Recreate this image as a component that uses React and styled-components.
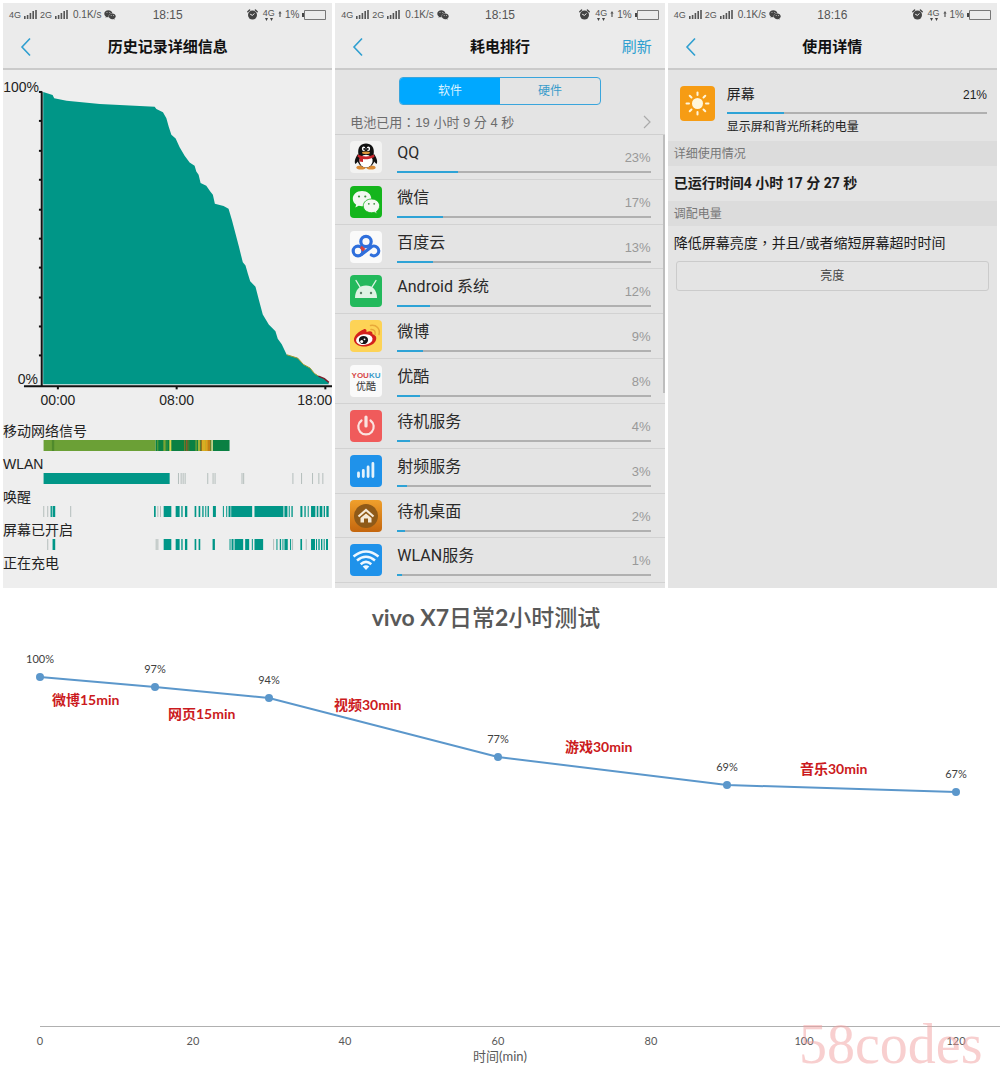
import { useState } from 'react';
import styled, { createGlobalStyle } from 'styled-components';
import { FaWeixin } from 'react-icons/fa';

const GlobalStyle = createGlobalStyle`
  * {
    margin: 0;
    padding: 0;
    box-sizing: border-box;
  }
  body {
    background: #fff;
    font-family: "Liberation Sans", "Noto Sans CJK SC", sans-serif;
  }
  button {
    font-family: inherit;
    border: none;
    background: none;
    cursor: pointer;
  }
  svg {
    display: block;
  }
`;

const Panels = styled.main`
  display: grid;
  grid-template-columns: repeat(3, 1fr);
  gap: 3px;
  padding: 3px 3px 0;
`;

const Panel = styled.section`
  display: flex;
  flex-direction: column;
  min-width: 0;
  background: ${(props) => props.$bg || '#e4e4e4'};
`;

const Header = styled.header`
  background: #ebebeb;
  border-bottom: 2px solid #cacaca;
`;

const Status = styled.div`
  display: grid;
  grid-template-columns: 1fr auto 1fr;
  align-items: center;
  height: 23px;
  padding: 0 6px;
  color: #555;
  font-size: 9px;
`;

const StatusSide = styled.div`
  display: flex;
  align-items: center;
  gap: 3px;
  justify-content: ${(props) => (props.$end ? 'flex-end' : 'flex-start')};
`;

const Speed = styled.span`
  font-size: 10px;
  margin-left: 2px;
`;

const Level = styled.span`
  font-size: 10px;
`;

const NetType = styled.span`
  display: flex;
  flex-direction: column;
  align-items: center;
  line-height: 9px;
  margin-left: 2px;
`;

const Time = styled.span`
  font-size: 12px;
`;

const NavBar = styled.div`
  display: grid;
  grid-template-columns: 1fr auto 1fr;
  align-items: center;
  height: 42px;
  padding: 0 13px 1px;
`;

const BackButton = styled.button`
  justify-self: start;
  width: 20px;
  height: 24px;
`;

const Title = styled.h1`
  font-size: 15px;
  line-height: 20px;
  font-weight: bold;
  color: #111;
`;

const Refresh = styled.button`
  justify-self: end;
  font-size: 15px;
  line-height: 20px;
  color: #2f9fd0;
`;

/* history panel */
const ActivityList = styled.ul`
  list-style: none;
  padding-bottom: 16px;
`;

const ActivityItem = styled.li`
  padding-bottom: ${(props) => (props.$last ? '0' : '4px')};
`;

const ActivityName = styled.p`
  font-size: 14px;
  line-height: 18px;
  color: #222;
`;

/* ranking panel */
const Segment = styled.div`
  display: flex;
  width: 202px;
  height: 28px;
  margin: 7px auto 0;
  border: 1px solid #3aa5dc;
  border-radius: 4px;
  overflow: hidden;
`;

const SegmentButton = styled.button`
  flex: 1;
  font-size: 12px;
  line-height: 20px;
  color: ${(props) => (props.$active ? '#d9f2ff' : '#3a9ccb')};
  background: ${(props) => (props.$active ? '#00a8ff' : 'transparent')};
`;

const UsedRow = styled.button`
  display: flex;
  align-items: center;
  justify-content: space-between;
  height: 30px;
  padding: 4px 14px 0 15px;
  font-family: "Liberation Sans", "Noto Sans CJK TC", sans-serif;
  font-size: 13px;
  color: #6c6c6c;
  border-bottom: 1px solid #cfcfcf;
`;

const AppList = styled.ul`
  flex: 1;
  display: grid;
  grid-auto-rows: 1fr;
  list-style: none;
  padding-bottom: 5px;
  position: relative;
  &::after {
    content: "";
    position: absolute;
    right: 0;
    top: 0;
    width: 2px;
    height: 57%;
    background: #bdbdbd;
  }
`;

const AppRow = styled.li`
  display: grid;
  grid-template-columns: 32px 1fr;
  gap: 15px;
  padding: 6px 14px 0 15px;
  border-bottom: 1px solid #d2d2d2;
`;

const AppHead = styled.div`
  display: flex;
  justify-content: space-between;
  height: 30px;
`;

const AppName = styled.span`
  font-family: Roboto, "Noto Sans CJK SC", sans-serif;
  font-size: 16px;
  line-height: 24px;
  color: #2a2a2a;
`;

const AppPercent = styled.span`
  font-size: 13px;
  line-height: 34px;
  color: #999;
`;

const Track = styled.div`
  height: 2px;
  background: #b0b0b0;
`;

const Fill = styled.div`
  height: 100%;
  background: #2ea3d6;
`;

/* usage panel */
const UsageTop = styled.div`
  display: grid;
  grid-template-columns: 35px 1fr;
  gap: 12px;
  padding: 16px 10px 0 12px;
  height: 71px;
`;

const UsageHead = styled.div`
  display: flex;
  justify-content: space-between;
  height: 26px;
  line-height: 16px;
  font-size: 14px;
  color: #222;
`;

const UsagePercent = styled.span`
  font-size: 12px;
  line-height: 18px;
`;

const UsageNote = styled.p`
  margin-top: 4px;
  font-size: 12px;
  line-height: 18px;
  color: #222;
`;

const SectionTitle = styled.h2`
  padding: 1px 0 0 6px;
  font-size: 12px;
  line-height: 24px;
  font-weight: normal;
  color: #777;
  background: #dcdcdc;
`;

const SectionText = styled.p`
  padding-left: 6px;
  font-family: Roboto, "Noto Sans CJK TC", sans-serif;
  font-size: 14px;
  line-height: 35px;
  white-space: nowrap;
  color: #1c1c1c;
`;

const ValueText = styled(SectionText)`
  font-family: Roboto, "Noto Sans CJK SC", sans-serif;
  font-weight: bold;
`;

const BrightButton = styled.button`
  height: 30px;
  margin: 0 8px;
  border: 1px solid #cbcbcb;
  border-radius: 3px;
  font-size: 12px;
  line-height: 20px;
  color: #444;
`;

/* test chart */
const Report = styled.section`
  font-family: Lato, "Noto Sans CJK SC", sans-serif;
`;

const ReportTitle = styled.h2`
  padding: 14px 28px 0 0;
  text-align: center;
  font-size: 23px;
  line-height: 30px;
  color: #595959;
  span {
    font-weight: 500;
  }
`;

const ChartSvg = styled.svg`
  width: 100%;
  height: auto;
`;

const StripSvg = styled.svg`
  width: 100%;
  height: 11px;
`;

const Signal = () => (
  <svg width="13" height="9" viewBox="0 0 13 9" fill="#555">
    <rect x="0" y="6" width="1.6" height="3" />
    <rect x="2.8" y="5" width="1.6" height="4" />
    <rect x="5.6" y="3" width="1.6" height="6" />
    <rect x="8.4" y="1" width="1.6" height="8" />
    <rect x="11.2" y="0" width="1.6" height="9" />
  </svg>
);

const AlarmIcon = () => (
  <svg width="11" height="11" viewBox="0 0 11 11">
    <circle cx="5.5" cy="6" r="4.5" fill="#444" />
    <path d="M.8 2.8 2.6 1M10.2 2.8 8.4 1" stroke="#444" strokeWidth="1.4" strokeLinecap="round" />
    <path d="M3.2 5.2 5.5 6.4 7.4 4.4" stroke="#eee" strokeWidth="1" fill="none" />
  </svg>
);

const NetIcon = () => (
  <svg width="4" height="8" viewBox="0 0 4 8" fill="#555">
    <path d="M2 0 3.6 2.5H2.6V6H1.4V2.5H.4Z" />
  </svg>
);

const Dots = () => (
  <svg width="8" height="3" viewBox="0 0 8 3" fill="#444">
    <path d="M0 0H3L1.5 3ZM5 0H8L6.5 3Z" />
  </svg>
);

const Battery = () => (
  <svg width="24" height="10" viewBox="0 0 24 10" fill="none" stroke="#777">
    <path d="M2.5.5h21v9h-21z" />
    <path d="M1 3v4" stroke="#444" strokeWidth="2" />
  </svg>
);

const PhoneHeader = ({ time, title, action }) => (
  <Header>
    <Status>
      <StatusSide>
        <span>4G</span>
        <Signal />
        <span>2G</span>
        <Signal />
        <Speed>0.1K/s</Speed>
        <FaWeixin size={12} color="#444" />
      </StatusSide>
      <Time>{time}</Time>
      <StatusSide $end>
        <AlarmIcon />
        <NetType>
          4G
          <Dots />
        </NetType>
        <NetIcon />
        <Level>1%</Level>
        <Battery />
      </StatusSide>
    </Status>
    <NavBar>
      <BackButton aria-label="返回">
        <svg width="20" height="24" viewBox="0 0 20 24">
          <path d="M14 3.5 6 12 14 20.5" fill="none" stroke="#2f9fd0" strokeWidth="1.6" />
        </svg>
      </BackButton>
      <Title>{title}</Title>
      {action && <Refresh>{action}</Refresh>}
    </NavBar>
  </Header>
);

const LEVELS =
  '40.3,22 49.7,25 51.3,28.3 63.7,30.7 97,34 152,36.7 153.7,39 160.3,42.3 163.7,48.3 166,56.7 168.7,65 173,68.7 177,77.3 182,86 187,92.7 192,96 193.7,101.7 196,105 198,113.3 203.7,116 207.7,121.7 210.3,125 212.3,134 221,136.3 226,139 229.3,150 233,164 236.3,176.7 240.3,192.7 243,196 245.3,204 247.7,211.7 253,217.3 256.3,230 260.3,245 266.3,255 273,261.7 275.3,269.3 279.3,274.7 284.3,285.3 295.3,288.7 301,295 307.7,298.7 312,304 316.3,306.7 322,309.3 326.3,312.7 326.3,315 40.3,315';

const BatteryChart = () => (
  <ChartSvg viewBox="0 0 330 353" fontSize="14" fill="#222">
    <polygon points={LEVELS} fill="#009687" stroke="none" />
    <path d="M284.3 285.3 295.3 288.7 301 295 307.7 298.7 312 304 316 306.7" fill="none" stroke="#a39a2c" />
    <path d="M316 306.7 322 309.3 326.5 313" fill="none" stroke="#7a1f2c" strokeWidth="1.4" />
    <path d="M38.8 21.5V317M21 317H330" stroke="#111" strokeWidth="2" fill="none" />
    {[22, 51, 81, 110, 140, 169, 198, 228, 257, 286].map((y) => (
      <path key={y} d={`M36 ${y}h3`} stroke="#111" strokeWidth="2" />
    ))}
    {[55, 174, 323].map((x) => (
      <path key={x} d={`M${x} 317v3`} stroke="#111" strokeWidth="2" />
    ))}
    <text x="36" y="22" textAnchor="end">100%</text>
    <text x="35" y="315" textAnchor="end">0%</text>
    <text x="55" y="336" textAnchor="middle">00:00</text>
    <text x="174" y="336" textAnchor="middle">08:00</text>
    <text x="330" y="336" textAnchor="end">18:00</text>
  </ChartSvg>
);

const TEAL = '#009687';
const PALE = '#b4bebc';
const teal = (list) => list.map(([x, w]) => [x, w, TEAL]);
const pale = (list) => list.map((x) => [x, 3, PALE]);

// every mark is [start, width, colour] on a 990 unit time line
const ACTIVITY = [
  {
    name: '移动网络信号',
    marks: [
      [122, 337, '#6ba036'], [147, 7, '#4f8a2c'], [459, 222, '#0a8043'], [463, 4, '#4f9a38'],
      [482, 7, '#7ba435'], [491, 4, '#2f8f3d'], [500, 6, '#d8d34a'], [544, 4, '#6b7a2c'],
      [550, 5, '#8a5a28'], [557, 3, '#4f7a2c'], [578, 5, '#5b9a38'], [586, 7, '#a0b43a'],
      [594, 4, '#a06c1c'], [598, 12, '#d9ae22'], [610, 6, '#e0a01c'], [616, 8, '#c47f14'],
      [626, 5, '#d8d890'],
    ],
  },
  {
    name: 'WLAN',
    marks: [
      [122, 379, TEAL],
      ...pale([526, 534, 540, 546, 614, 630, 636, 717, 722, 870, 896, 929, 948, 960]),
    ],
  },
  {
    name: '唤醒',
    marks: [
      ...pale([121, 133, 202, 464, 472]),
      ...teal([
        [143, 4], [149, 8], [454, 5], [483, 23], [519, 12], [536, 4], [547, 7], [576, 5],
        [588, 5], [599, 4], [608, 3], [615, 4], [631, 9], [661, 3], [671, 3], [678, 6],
        [686, 63], [756, 87], [846, 9], [859, 3], [867, 4], [894, 6], [906, 4], [916, 3],
        [926, 13], [943, 5], [952, 8], [964, 4], [972, 7],
      ]),
    ],
  },
  {
    name: '屏幕已开启',
    marks: [
      ...pale([133, 459, 464, 812, 869, 910]),
      ...teal([
        [149, 8], [483, 23], [519, 12], [536, 4], [547, 7], [576, 5], [588, 5], [630, 7],
        [681, 3], [687, 6], [696, 26], [728, 12], [748, 3], [756, 26], [822, 3], [832, 4],
        [840, 3], [846, 10], [863, 3], [894, 5], [926, 12], [941, 3], [948, 4], [956, 4],
        [964, 3], [971, 6],
      ]),
    ],
  },
  { name: '正在充电' },
];

const iconArt = {
  qq: (
    <>
      <rect width="32" height="32" rx="4" fill="#f3f3f2" />
      <ellipse cx="11" cy="26.5" rx="4.6" ry="2" fill="#d98a35" />
      <ellipse cx="21" cy="26.5" rx="4.6" ry="2" fill="#d98a35" />
      <path d="M8 13C5 17 4 21 5.5 23 7 22 8 20 9 19ZM24 13C27 17 28 21 26.5 23 25 22 24 20 23 19Z" fill="#111" />
      <ellipse cx="16" cy="18" rx="8.8" ry="8.5" fill="#111" />
      <path d="M8.5 14C7 6 11 2.5 16 2.5S25 6 23.5 14Z" fill="#111" />
      <ellipse cx="16" cy="20" rx="6.6" ry="6.3" fill="#fff" />
      <ellipse cx="13.6" cy="7.8" rx="1.7" ry="2.3" fill="#fff" />
      <ellipse cx="18.4" cy="7.8" rx="1.7" ry="2.3" fill="#fff" />
      <circle cx="14.2" cy="8" r=".9" />
      <circle cx="17.8" cy="8" r=".9" />
      <ellipse cx="16" cy="11.8" rx="4" ry="1.2" fill="#e0963a" />
      <path d="M8 13.5C13 16 19 16 24 13.5L24.5 16C20 18.5 15 18.5 13 18V21L9.5 20.5V17L7.5 15.5Z" fill="#c9242b" />
    </>
  ),
  wechat: (
    <>
      <rect width="32" height="32" rx="4" fill="#14b51c" />
      <path d="M12 5C6.5 5 2.8 8.5 2.8 12.7c0 2.5 1.3 4.5 3.4 6L5.3 21.5 8.7 19.8c1.2.3 2.2.5 3.3.5 5.6 0 9.3-3.3 9.3-7.6S17.5 5 12 5Z" fill="#f3f8f1" />
      <path d="M21.5 13c-4.7 0-8.2 3-8.2 6.8s3.5 6.9 8.2 6.9c1 0 2-.2 2.9-.4L27.2 28l-.8-2.5c2-1.5 3.2-3.4 3.2-5.7 0-3.8-3.5-6.8-8.1-6.8Z" fill="#f3f8f1" stroke="#14b51c" strokeWidth=".8" />
      <g fill="#3c8f3c">
        <circle cx="9" cy="10.5" r="1.1" /><circle cx="15.3" cy="10.5" r="1.1" />
        <circle cx="18.8" cy="17.8" r=".9" /><circle cx="24.2" cy="17.8" r=".9" />
      </g>
    </>
  ),
  baidu: (
    <>
      <rect width="32" height="32" rx="4" fill="#fafafa" />
      <g fill="none" stroke="#2f6fdc" strokeWidth="3.2" strokeLinecap="round">
        <circle cx="16" cy="10.5" r="5.2" />
        <circle cx="8" cy="20" r="4.8" />
        <path d="M11.5 23.5 20.6 16.5A4.8 4.8 0 1 1 21.3 24" />
      </g>
      <path d="M11.7 14.8 15.5 18 12.6 20.6 10 17Z" fill="#d8403c" />
    </>
  ),
  android: (
    <>
      <rect width="32" height="32" rx="4" fill="#23b95c" />
      <path d="M6 5.5 10 12M26 5.5 22 12" stroke="#dff3e4" strokeWidth="1.4" strokeLinecap="round" />
      <path d="M5 23C5 15 9.5 10.5 16 10.5S27 15 27 23Z" fill="#dff3e4" />
      <circle cx="11" cy="18" r="1.2" fill="#5a7f66" />
      <circle cx="21" cy="18" r="1.2" fill="#5a7f66" />
    </>
  ),
  weibo: (
    <>
      <rect width="32" height="32" rx="4" fill="#fdd356" />
      <path d="M13.5 9.5C15 8.5 17 9 16.5 12 20 10.5 23 11 22.5 14.2 25.5 15 27 17 26 20 24.5 24.5 18.5 27 13 26.5 7.5 26 3.5 23 4 19 4.5 15.5 9 11 13.5 9.5Z" fill="#d4211c" />
      <ellipse cx="14.3" cy="19.6" rx="8.3" ry="5.3" fill="#fff" transform="rotate(-8 14.3 19.6)" />
      <ellipse cx="13.5" cy="20" rx="4.6" ry="4.1" fill="#16161a" />
      <circle cx="11.7" cy="21.4" r="1.5" fill="#fff" />
      <circle cx="14.5" cy="19.3" r=".9" fill="#fff" />
      <path d="M21 9.5C24 9 26 11.5 25 14.5M20.5 5.5C26.5 4.5 30.5 9 29 14.5" fill="none" stroke="#e8a93a" strokeWidth="1.5" strokeLinecap="round" />
    </>
  ),
  youku: (
    <>
      <rect width="32" height="32" rx="4" fill="#fafafa" />
      <text x="16" y="13" textAnchor="middle" fontSize="8" fontWeight="bold" fill="#d64848">
        YOU<tspan fill="#3d9bc9">KU</tspan>
      </text>
      <text x="16" y="25" textAnchor="middle" fontSize="10" fill="#333">优酷</text>
    </>
  ),
  power: (
    <>
      <rect width="32" height="32" rx="4" fill="#f05b5b" />
      <path d="M11.5 10.5A7.7 7.7 0 1 0 20.5 10.5" fill="none" stroke="#fbe3e0" strokeWidth="2.2" strokeLinecap="round" />
      <path d="M16 7V16" stroke="#fbe3e0" strokeWidth="3.2" strokeLinecap="round" />
    </>
  ),
  radio: (
    <>
      <rect width="32" height="32" rx="4" fill="#1f92ea" />
      <path d="M8.5 21.5V18M13.3 21.5V15.5M18.1 21.5V12M22.9 21.5V8.5" stroke="#e4f3fc" strokeWidth="2.8" strokeLinecap="round" />
    </>
  ),
  home: (
    <>
      <defs>
        <linearGradient id="homeBg" x1="0" y1="0" x2="0" y2="1">
          <stop offset="0" stopColor="#f0a02c" />
          <stop offset="1" stopColor="#c4660e" />
        </linearGradient>
      </defs>
      <rect width="32" height="32" rx="4" fill="url(#homeBg)" />
      <circle cx="16" cy="16" r="12" fill="#8f5a18" />
      <path d="M8.5 16.5 16 10 23.5 16.5" fill="none" stroke="#f5ead8" strokeWidth="2.2" />
      <path d="M10.5 18 16 13.5 21.5 18V22.5H18V18.5H14V22.5H10.5Z" fill="#f5ead8" />
    </>
  ),
  wifi: (
    <>
      <rect width="32" height="32" rx="4" fill="#1f92ea" />
      <path d="M3.5 12.5Q16 2.5 28.5 12.5M7 16.5Q16 9 25 16.5M10.7 20.3Q16 15.5 21.3 20.3" fill="none" stroke="#eef8ff" strokeWidth="2.5" />
      <path d="M12.7 22.5Q16 20 19.3 22.5L16 26Z" fill="#eef8ff" />
    </>
  ),
};

const APPS = [
  { name: 'QQ', icon: 'qq', percent: 23, bar: 24 },
  { name: '微信', icon: 'wechat', percent: 17, bar: 18 },
  { name: '百度云', icon: 'baidu', percent: 13, bar: 14 },
  { name: 'Android 系统', icon: 'android', percent: 12, bar: 13 },
  { name: '微博', icon: 'weibo', percent: 9, bar: 10 },
  { name: '优酷', icon: 'youku', percent: 8, bar: 9 },
  { name: '待机服务', icon: 'power', percent: 4, bar: 5 },
  { name: '射频服务', icon: 'radio', percent: 3, bar: 4 },
  { name: '待机桌面', icon: 'home', percent: 2, bar: 3 },
  { name: 'WLAN服务', icon: 'wifi', percent: 1, bar: 2 },
];

const SunIcon = () => (
  <svg width="35" height="35" viewBox="0 0 35 35">
    <rect width="35" height="35" rx="4" fill="#f69c14" />
    <circle cx="17.5" cy="17.5" r="5.5" fill="#fff6dc" />
    {[0, 45, 90, 135, 180, 225, 270, 315].map((a) => (
      <path key={a} d="M17.5 6.5V9" stroke="#fff6dc" strokeWidth="2" strokeLinecap="round" transform={`rotate(${a} 17.5 17.5)`} />
    ))}
  </svg>
);

const RESULTS = [[0, 100], [15, 97], [30, 94], [60, 77], [90, 69], [120, 67]];
const NOTES = [
  [52, 73, '微博15min'],
  [168, 87, '网页15min'],
  [334, 78, '视频30min'],
  [565, 120, '游戏30min'],
  [800, 142, '音乐30min'],
];

const toX = (min) => Math.round(40 + min * 7.635);
const toY = (level) => Math.round(45 + (100 - level) * 3.49);

const TestChart = () => (
  <ChartSvg viewBox="0 0 1000 444">
    <polyline
      points={RESULTS.map(([m, v]) => `${toX(m)},${toY(v)}`).join(' ')}
      fill="none"
      stroke="#5b97cb"
      strokeWidth="2"
    />
    {RESULTS.map(([m, v]) => (
      <g key={m}>
        <circle cx={toX(m)} cy={toY(v)} r="4" fill="#5b97cb" />
        <text x={toX(m)} y={toY(v) - 14} textAnchor="middle" fontSize="11" fill="#404040">{v}%</text>
      </g>
    ))}
    {NOTES.map(([x, y, label]) => (
      <text key={label} x={x} y={y} fontSize="14" fontWeight="bold" fill="#cb1a20">{label}</text>
    ))}
    <path d="M40 394.5H1000" stroke="#b0b0b0" />
    {[0, 20, 40, 60, 80, 100, 120].map((m) => (
      <text key={m} x={toX(m)} y="413" textAnchor="middle" fontSize="11" fill="#595959">{m}</text>
    ))}
    <text x="500" y="429" textAnchor="middle" fontSize="13" fill="#595959">时间(min)</text>
    <text x="799" y="431" fontSize="56" fontFamily="Liberation Serif, serif" fill="#f2a0a0" fillOpacity=".5">58codes</text>
  </ChartSvg>
);

export default function App() {
  const [tab, setTab] = useState('软件');

  return (
    <>
      <GlobalStyle />
      <Panels>
        <Panel $bg="#eeeeee">
          <PhoneHeader time="18:15" title="历史记录详细信息" />
          <BatteryChart />
          <ActivityList>
            {ACTIVITY.map(({ name, marks }) => (
              <ActivityItem key={name} $last={!marks}>
                <ActivityName>{name}</ActivityName>
                {marks && (
                  <StripSvg viewBox="0 0 990 11" preserveAspectRatio="none">
                    {marks.map(([x, w, color]) => (
                      <rect key={x} x={x} width={w} height="11" fill={color} />
                    ))}
                  </StripSvg>
                )}
              </ActivityItem>
            ))}
          </ActivityList>
        </Panel>

        <Panel>
          <PhoneHeader time="18:15" title="耗电排行" action="刷新" />
          <Segment>
            {['软件', '硬件'].map((t) => (
              <SegmentButton key={t} $active={tab === t} onClick={() => setTab(t)}>{t}</SegmentButton>
            ))}
          </Segment>
          <UsedRow>
            <span>电池已用：19 小时 9 分 4 秒</span>
            <svg width="8" height="14" viewBox="0 0 8 14">
              <path d="M1 1 7 7 1 13" fill="none" stroke="#aaa" strokeWidth="1.2" />
            </svg>
          </UsedRow>
          <AppList>
            {APPS.map((app) => (
              <AppRow key={app.name}>
                <svg width="32" height="32" viewBox="0 0 32 32">{iconArt[app.icon]}</svg>
                <div>
                  <AppHead>
                    <AppName>{app.name}</AppName>
                    <AppPercent>{app.percent}%</AppPercent>
                  </AppHead>
                  <Track>
                    <Fill style={{ width: `${app.bar}%` }} />
                  </Track>
                </div>
              </AppRow>
            ))}
          </AppList>
        </Panel>

        <Panel>
          <PhoneHeader time="18:16" title="使用详情" />
          <UsageTop>
            <SunIcon />
            <div>
              <UsageHead>
                <span>屏幕</span>
                <UsagePercent>21%</UsagePercent>
              </UsageHead>
              <Track>
                <Fill style={{ width: '22%' }} />
              </Track>
              <UsageNote>显示屏和背光所耗的电量</UsageNote>
            </div>
          </UsageTop>
          <SectionTitle>详细使用情况</SectionTitle>
          <ValueText>已运行时间4 小时 17 分 27 秒</ValueText>
          <SectionTitle>调配电量</SectionTitle>
          <SectionText>降低屏幕亮度，并且/或者缩短屏幕超时时间</SectionText>
          <BrightButton>亮度</BrightButton>
        </Panel>
      </Panels>

      <Report>
        <ReportTitle>
          vivo X7<span>日常</span>2<span>小时测试</span>
        </ReportTitle>
        <TestChart />
      </Report>
    </>
  );
}
